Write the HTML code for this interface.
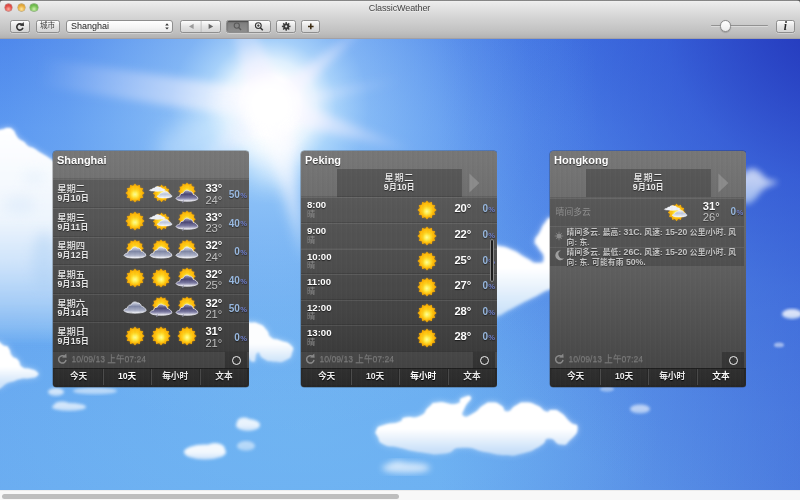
<!DOCTYPE html>
<html lang="zh">
<head>
<meta charset="utf-8">
<title>ClassicWeather</title>
<style>
*{box-sizing:border-box;margin:0;padding:0}
html,body{width:800px;height:500px;overflow:hidden;background:#6aa8ee;font-family:"Liberation Sans","Noto Sans CJK SC",sans-serif;}
#win{position:relative;width:800px;height:500px;overflow:hidden;background:#555}
/* ---------- title / toolbar ---------- */
#bar{will-change:transform;position:absolute;left:0;top:0;width:800px;height:39px;background:linear-gradient(#7a7a7a 0,#8a8a8a .7px,#f0f0f0 1.2px,#ebebeb 2.5px,#d6d6d6 16px,#c3c3c3 30px,#bcbcbc 34px,#b2b2b2 38px);border-bottom:1px solid #a2a0a6;z-index:5;border-radius:3.5px 3.5px 0 0}
#title{position:absolute;left:0;width:799px;top:3.1px;text-align:center;font-size:9px;line-height:11px;color:#444;letter-spacing:-0.1px;text-shadow:0 1px 0 rgba(255,255,255,.5)}
.tl{position:absolute;top:3.6px;width:7.2px;height:7.2px;border-radius:50%}
.tl.r{left:5.2px;background:radial-gradient(circle at 50% 72%,#ffb0a0 0,#e4504a 50%,#c23a34 100%);box-shadow:0 0 0 .4px #a84a44}
.tl.y{left:17.6px;background:radial-gradient(circle at 50% 72%,#ffe6a0 0,#eab040 50%,#c88e26 100%);box-shadow:0 0 0 .4px #a88434}
.tl.g{left:30.4px;background:radial-gradient(circle at 50% 72%,#d0f0b0 0,#78c254 50%,#54a03a 100%);box-shadow:0 0 0 .4px #5c9044}
.btn{position:absolute;top:20px;height:12.5px;border:1px solid #8e8e8e;border-radius:2.5px;background:linear-gradient(#fdfdfd,#e4e4e4 50%,#d4d4d4);box-shadow:0 .5px 0 rgba(255,255,255,.6);font-size:7px;line-height:10px;text-align:center;color:#444;overflow:hidden}
.btn svg{position:absolute;left:0;top:0}
/* ---------- sky ---------- */
#sky{position:absolute;left:0;top:38px;width:800px;height:453px;overflow:hidden;
background:
radial-gradient(circle 520px at 840px -30px,rgba(30,44,180,.9) 0,rgba(34,54,188,.78) 14%,rgba(40,70,204,.5) 34%,rgba(46,84,212,.3) 55%,rgba(54,96,218,.12) 80%,rgba(60,100,220,0) 100%),
linear-gradient(90deg,rgba(70,110,220,0) 55%,rgba(58,96,212,.62) 100%),
linear-gradient(#4a84eb 0,#5895f0 20%,#66a6f0 60%,#6aacf1 100%);}
#sky svg{position:absolute;left:0;top:0}
/* ---------- bottom scrollbar ---------- */
#hs{position:absolute;left:0;top:490px;width:800px;height:10px;background:#f8f8f8;border-top:1px solid #ececec}
#hs i{position:absolute;left:2px;top:2.6px;width:397px;height:5.2px;border-radius:3px;background:#bebebe}
/* ---------- panels ---------- */
.panel{will-change:transform;position:absolute;top:150.7px;width:195.5px;height:236px;border-radius:3.5px;overflow:hidden;
background:linear-gradient(#777 0,#767676 4%,#5c5c5c 55%,#424242 100%);box-shadow:0 0 0 .5px rgba(40,40,40,.55)}
.panel:before{content:"";position:absolute;left:0;top:0;right:0;bottom:0;background:repeating-linear-gradient(90deg,rgba(255,255,255,.012) 0,rgba(255,255,255,.012) 1px,rgba(0,0,0,.016) 1px,rgba(0,0,0,.016) 3px,rgba(255,255,255,0) 3px,rgba(255,255,255,0) 5px);pointer-events:none;z-index:3}
.city{position:absolute;left:4px;top:3.2px;font-size:11px;line-height:13px;font-weight:bold;color:#fff;text-shadow:0 1px 1px rgba(0,0,0,.6)}
.foot{position:absolute;left:0;top:200.3px;width:196px;height:17px;background:rgba(0,0,0,.03);border-top:1px solid rgba(0,0,0,.2)}
.foot .ts{position:absolute;left:18.5px;top:1.8px;font-size:8.6px;line-height:11px;color:#7a7a7a;text-shadow:0 1px 0 rgba(255,255,255,.12);white-space:nowrap}
.foot svg{position:absolute;left:4.2px;top:1.2px}
.foot .cb{position:absolute;left:172.4px;top:0;width:22px;height:17px;background:rgba(0,0,0,.24)}
.foot .cb i{position:absolute;left:6.3px;top:3.7px;width:9px;height:9px;border:1.6px solid #f2f2f2;border-radius:50%}
.tabs{position:absolute;left:0;top:216.8px;width:196px;height:19.2px;background:#272727;border-top:1px solid #1e1e1e}
.tabs span{position:absolute;top:0;height:16px;width:47.8px;background:linear-gradient(#303030,#2a2a2a);border-left:1px solid #4a4a4a;color:#ececec;font-size:8.7px;line-height:14.6px;font-weight:bold;text-align:center;text-shadow:0 1px 1px #000}
.tabs span.on{color:#fff}
</style>
</head>
<body>
<div id="win">
<div id="sky"><svg width="800" height="453" viewBox="0 38 800 453">
<defs>
<radialGradient id="glow" cx="270" cy="106" r="330" gradientUnits="userSpaceOnUse">
<stop offset="0" stop-color="#fff" stop-opacity="1"/>
<stop offset="0.085" stop-color="#fff" stop-opacity="1"/>
<stop offset="0.14" stop-color="#eaf8ff" stop-opacity=".92"/>
<stop offset="0.2" stop-color="#c8ecff" stop-opacity=".72"/>
<stop offset="0.3" stop-color="#b0defc" stop-opacity=".52"/>
<stop offset="0.46" stop-color="#a4d6fa" stop-opacity=".38"/>
<stop offset="0.62" stop-color="#9fd2f8" stop-opacity=".2"/>
<stop offset="0.8" stop-color="#9cd0f8" stop-opacity=".07"/>
<stop offset="1" stop-color="#9cd0f8" stop-opacity="0"/>
</radialGradient>
<radialGradient id="haze" cx="300" cy="430" r="1" gradientUnits="userSpaceOnUse" gradientTransform="translate(300 430) scale(360 200) translate(-300 -430)">
<stop offset="0" stop-color="#7cc6f4" stop-opacity=".34"/><stop offset=".5" stop-color="#7cc6f4" stop-opacity=".2"/><stop offset="1" stop-color="#7cc6f4" stop-opacity="0"/>
</radialGradient>
<filter id="b1" x="-20%" y="-20%" width="140%" height="140%"><feGaussianBlur stdDeviation="1"/></filter>
<filter id="b2" x="-20%" y="-20%" width="140%" height="140%"><feGaussianBlur stdDeviation="1.8"/></filter>
<filter id="b3" x="-20%" y="-20%" width="140%" height="140%"><feGaussianBlur stdDeviation="3"/></filter>
<filter id="b4" x="-30%" y="-30%" width="160%" height="160%"><feGaussianBlur stdDeviation="4"/></filter>
<filter id="b6" x="-30%" y="-30%" width="160%" height="160%"><feGaussianBlur stdDeviation="6"/></filter>
<filter id="b10" x="-40%" y="-40%" width="180%" height="180%"><feGaussianBlur stdDeviation="10"/></filter>
</defs>
<rect x="0" y="38" width="800" height="453" fill="url(#haze)"/>
<rect x="0" y="38" width="800" height="453" fill="url(#glow)"/>
<linearGradient id="rg0" gradientUnits="userSpaceOnUse" x1="270" y1="106" x2="236" y2="10"><stop offset="0" stop-color="#fff" stop-opacity="1"/><stop offset=".4" stop-color="#f4f1ff" stop-opacity="0.6"/><stop offset="1" stop-color="#ece8ff" stop-opacity="0"/></linearGradient>
<linearGradient id="rg1" gradientUnits="userSpaceOnUse" x1="270" y1="106" x2="372" y2="20"><stop offset="0" stop-color="#fff" stop-opacity="1"/><stop offset=".4" stop-color="#f4f1ff" stop-opacity="0.6"/><stop offset="1" stop-color="#ece8ff" stop-opacity="0"/></linearGradient>
<linearGradient id="rg2" gradientUnits="userSpaceOnUse" x1="270" y1="106" x2="40" y2="72"><stop offset="0" stop-color="#fff" stop-opacity="0.85"/><stop offset=".4" stop-color="#f4f1ff" stop-opacity="0.51"/><stop offset="1" stop-color="#ece8ff" stop-opacity="0"/></linearGradient>
<linearGradient id="rg3" gradientUnits="userSpaceOnUse" x1="270" y1="106" x2="412" y2="150"><stop offset="0" stop-color="#fff" stop-opacity="0.95"/><stop offset=".4" stop-color="#f4f1ff" stop-opacity="0.57"/><stop offset="1" stop-color="#ece8ff" stop-opacity="0"/></linearGradient>
<linearGradient id="rg4" gradientUnits="userSpaceOnUse" x1="270" y1="106" x2="400" y2="80"><stop offset="0" stop-color="#fff" stop-opacity="0.5"/><stop offset=".4" stop-color="#f4f1ff" stop-opacity="0.3"/><stop offset="1" stop-color="#ece8ff" stop-opacity="0"/></linearGradient>
<linearGradient id="rg5" gradientUnits="userSpaceOnUse" x1="270" y1="106" x2="190" y2="175"><stop offset="0" stop-color="#fff" stop-opacity="0.8"/><stop offset=".4" stop-color="#f4f1ff" stop-opacity="0.48"/><stop offset="1" stop-color="#ece8ff" stop-opacity="0"/></linearGradient>
<linearGradient id="rg6" gradientUnits="userSpaceOnUse" x1="270" y1="106" x2="306" y2="250"><stop offset="0" stop-color="#fff" stop-opacity="0.7"/><stop offset=".4" stop-color="#f4f1ff" stop-opacity="0.42"/><stop offset="1" stop-color="#ece8ff" stop-opacity="0"/></linearGradient>
<linearGradient id="rg7" gradientUnits="userSpaceOnUse" x1="270" y1="106" x2="312" y2="180"><stop offset="0" stop-color="#fff" stop-opacity="0.6"/><stop offset=".4" stop-color="#f4f1ff" stop-opacity="0.36"/><stop offset="1" stop-color="#ece8ff" stop-opacity="0"/></linearGradient>
<g filter="url(#b4)">
<polygon points="287.0,100.0 253.0,112.0 228.5,12.7 243.5,7.3" fill="url(#rg0)"/>
<polygon points="277.1,114.4 262.9,97.6 371.0,18.9 373.0,21.1" fill="url(#rg1)"/>
<polygon points="272.2,91.2 267.8,120.8 38.0,85.8 42.0,58.2" fill="url(#rg2)"/>
<polygon points="266.2,118.4 273.8,93.6 412.6,148.1 411.4,151.9" fill="url(#rg3)"/>
<polygon points="271.6,113.8 268.4,98.2 399.6,78.0 400.4,82.0" fill="url(#rg4)"/>
<polygon points="260.2,94.6 279.8,117.4 193.3,178.8 186.7,171.2" fill="url(#rg5)"/>
<polygon points="256.4,109.4 283.6,102.6 307.0,249.8 305.0,250.2" fill="url(#rg6)"/>
<polygon points="261.3,110.9 278.7,101.1 312.9,179.5 311.1,180.5" fill="url(#rg7)"/>
</g>
<ellipse cx="205" cy="138" rx="50" ry="24" fill="#dff2ff" opacity=".42" filter="url(#b10)" transform="rotate(-20 205 138)"/>
<circle cx="270" cy="106" r="25" fill="#fff" filter="url(#b6)"/>
<ellipse cx="273" cy="150" rx="26" ry="34" fill="#fff" opacity=".45" filter="url(#b10)"/>
<polygon points="252,110 288,104 304,262" fill="#fff" opacity=".38" filter="url(#b6)"/>
<linearGradient id="bigc" gradientUnits="userSpaceOnUse" x1="0" y1="128" x2="0" y2="345"><stop offset="0" stop-color="#fff"/><stop offset=".42" stop-color="#eef5fd" stop-opacity="1"/><stop offset=".62" stop-color="#d4e7fb" stop-opacity=".9"/><stop offset=".8" stop-color="#bcdaf9" stop-opacity=".62"/><stop offset=".92" stop-color="#b0d4f7" stop-opacity=".3"/><stop offset="1" stop-color="#a8d0f6" stop-opacity="0"/></linearGradient>
<path d="M-20.0 133.0C-14.0 96.7 -13.3 132.2 -6.0 131.0C1.3 129.8 -2.7 130.5 2.0 129.5C6.7 128.5 4.3 127.8 8.0 128.0C11.7 128.2 10.3 127.7 13.0 130.0C15.7 132.3 14.0 132.0 16.0 135.0C18.0 138.0 16.3 136.7 19.0 139.0C21.7 141.3 21.0 139.7 24.0 142.0C27.0 144.3 24.7 143.8 28.0 146.0C31.3 148.2 30.0 146.3 34.0 148.5C38.0 150.7 36.0 150.0 40.0 152.5C44.0 155.0 42.0 153.5 46.0 156.0C50.0 158.5 47.3 157.0 52.0 160.0C56.7 163.0 54.0 160.7 60.0 165.0C66.0 169.3 64.7 164.7 70.0 173.0C75.3 181.3 73.3 171.0 76.0 190.0C78.7 209.0 77.3 193.3 78.0 230.0C78.7 266.7 78.0 261.7 78.0 300.0C78.0 338.3 94.0 328.3 78.0 345.0C62.0 361.7 62.7 350.0 30.0 350.0C-2.7 350.0 -2.0 381.7 -20.0 345.0C-38.0 308.3 -24.0 310.7 -24.0 240.0C-24.0 169.3 -26.0 169.3 -20.0 133.0Z" fill="url(#bigc)" filter="url(#b3)" opacity=".6"/><path d="M-20.0 133.0C-14.0 96.7 -13.3 132.2 -6.0 131.0C1.3 129.8 -2.7 130.5 2.0 129.5C6.7 128.5 4.3 127.8 8.0 128.0C11.7 128.2 10.3 127.7 13.0 130.0C15.7 132.3 14.0 132.0 16.0 135.0C18.0 138.0 16.3 136.7 19.0 139.0C21.7 141.3 21.0 139.7 24.0 142.0C27.0 144.3 24.7 143.8 28.0 146.0C31.3 148.2 30.0 146.3 34.0 148.5C38.0 150.7 36.0 150.0 40.0 152.5C44.0 155.0 42.0 153.5 46.0 156.0C50.0 158.5 47.3 157.0 52.0 160.0C56.7 163.0 54.0 160.7 60.0 165.0C66.0 169.3 64.7 164.7 70.0 173.0C75.3 181.3 73.3 171.0 76.0 190.0C78.7 209.0 77.3 193.3 78.0 230.0C78.7 266.7 78.0 261.7 78.0 300.0C78.0 338.3 94.0 328.3 78.0 345.0C62.0 361.7 62.7 350.0 30.0 350.0C-2.7 350.0 -2.0 381.7 -20.0 345.0C-38.0 308.3 -24.0 310.7 -24.0 240.0C-24.0 169.3 -26.0 169.3 -20.0 133.0Z" fill="url(#bigc)" filter="url(#b1)"/>
<g filter="url(#b6)" opacity=".4"><ellipse cx="44" cy="262" rx="12" ry="30" fill="#a9cdf3"/><ellipse cx="20" cy="205" rx="16" ry="10" fill="#d4e6fa"/><ellipse cx="34" cy="178" rx="12" ry="7" fill="#dbeafb"/></g>
<linearGradient id="cg1" gradientUnits="userSpaceOnUse" x1="0" y1="346" x2="0" y2="384"><stop offset="0" stop-color="#ffffff"/><stop offset="0.55" stop-color="#ffffff"/><stop offset="1" stop-color="#cfe4fa"/></linearGradient>
<path d="M-6.0 347.0C-2.3 334.3 0.0 345.3 5.0 346.0C10.0 346.7 6.7 345.7 9.0 349.0C11.3 352.3 9.0 352.3 12.0 356.0C15.0 359.7 14.7 356.3 18.0 360.0C21.3 363.7 18.0 364.0 22.0 367.0C26.0 370.0 25.0 367.3 30.0 369.0C35.0 370.7 34.7 369.7 37.0 372.0C39.3 374.3 39.3 374.0 37.0 376.0C34.7 378.0 35.7 377.0 30.0 378.0C24.3 379.0 26.7 377.7 20.0 379.0C13.3 380.3 18.7 380.3 10.0 382.0C1.3 383.7 -0.7 395.7 -6.0 384.0C-11.3 372.3 -9.7 359.7 -6.0 347.0Z" filter="url(#b3)" fill="url(#cg1)" opacity="0.55"/>
<path d="M-6.0 347.0C-2.3 334.3 0.0 345.3 5.0 346.0C10.0 346.7 6.7 345.7 9.0 349.0C11.3 352.3 9.0 352.3 12.0 356.0C15.0 359.7 14.7 356.3 18.0 360.0C21.3 363.7 18.0 364.0 22.0 367.0C26.0 370.0 25.0 367.3 30.0 369.0C35.0 370.7 34.7 369.7 37.0 372.0C39.3 374.3 39.3 374.0 37.0 376.0C34.7 378.0 35.7 377.0 30.0 378.0C24.3 379.0 26.7 377.7 20.0 379.0C13.3 380.3 18.7 380.3 10.0 382.0C1.3 383.7 -0.7 395.7 -6.0 384.0C-11.3 372.3 -9.7 359.7 -6.0 347.0Z" filter="url(#b1)" fill="url(#cg1)" opacity="1"/>
<linearGradient id="cg2" gradientUnits="userSpaceOnUse" x1="0" y1="388" x2="0" y2="396"><stop offset="0" stop-color="#ffffff"/><stop offset="0.55" stop-color="#ffffff"/><stop offset="1" stop-color="#d4e7fb"/></linearGradient>
<g filter="url(#b2)" fill="url(#cg2)" opacity="0.7">
<ellipse cx="56" cy="392" rx="8" ry="4"/>
</g>
<linearGradient id="cg3" gradientUnits="userSpaceOnUse" x1="0" y1="387.5" x2="0" y2="394.5"><stop offset="0" stop-color="#ffffff"/><stop offset="0.55" stop-color="#ffffff"/><stop offset="1" stop-color="#d4e7fb"/></linearGradient>
<g filter="url(#b2)" fill="url(#cg3)" opacity="0.55">
<ellipse cx="95" cy="391" rx="22" ry="3.5"/>
</g>
<linearGradient id="cg4" gradientUnits="userSpaceOnUse" x1="0" y1="401.5" x2="0" y2="411"><stop offset="0" stop-color="#ffffff"/><stop offset="0.55" stop-color="#ffffff"/><stop offset="1" stop-color="#d4e7fb"/></linearGradient>
<g filter="url(#b2)" fill="url(#cg4)" opacity="0.7">
<ellipse cx="69" cy="407" rx="17" ry="4"/>
<ellipse cx="62" cy="405" rx="8" ry="3.5"/>
</g>
<linearGradient id="cg5" gradientUnits="userSpaceOnUse" x1="0" y1="322" x2="0" y2="362"><stop offset="0" stop-color="#ffffff"/><stop offset="0.55" stop-color="#ffffff"/><stop offset="1" stop-color="#cfe4fa"/></linearGradient>
<path d="M240.0 322.0C243.7 317.8 242.7 321.8 249.0 322.5C255.3 323.2 253.2 321.5 259.0 324.0C264.8 326.5 262.5 325.5 266.5 330.0C270.5 334.5 266.5 334.0 271.0 337.5C275.5 341.0 273.5 338.0 280.0 340.5C286.5 343.0 286.5 341.0 290.5 345.0C294.5 349.0 293.5 347.5 292.0 352.5C290.5 357.5 292.0 357.0 286.0 360.0C280.0 363.0 281.5 362.0 274.0 361.5C266.5 361.0 269.0 361.5 263.5 358.5C258.0 355.5 261.0 351.3 257.5 352.5C254.0 353.7 257.2 362.8 253.0 362.0C248.8 361.2 250.0 359.0 245.0 350.0C240.0 341.0 239.7 344.3 238.0 335.0C236.3 325.7 236.3 326.2 240.0 322.0Z" filter="url(#b3)" fill="url(#cg5)" opacity="0.5335"/>
<path d="M240.0 322.0C243.7 317.8 242.7 321.8 249.0 322.5C255.3 323.2 253.2 321.5 259.0 324.0C264.8 326.5 262.5 325.5 266.5 330.0C270.5 334.5 266.5 334.0 271.0 337.5C275.5 341.0 273.5 338.0 280.0 340.5C286.5 343.0 286.5 341.0 290.5 345.0C294.5 349.0 293.5 347.5 292.0 352.5C290.5 357.5 292.0 357.0 286.0 360.0C280.0 363.0 281.5 362.0 274.0 361.5C266.5 361.0 269.0 361.5 263.5 358.5C258.0 355.5 261.0 351.3 257.5 352.5C254.0 353.7 257.2 362.8 253.0 362.0C248.8 361.2 250.0 359.0 245.0 350.0C240.0 341.0 239.7 344.3 238.0 335.0C236.3 325.7 236.3 326.2 240.0 322.0Z" filter="url(#b1)" fill="url(#cg5)" opacity="0.97"/>
<linearGradient id="cg6" gradientUnits="userSpaceOnUse" x1="0" y1="417.5" x2="0" y2="431"><stop offset="0" stop-color="#ffffff"/><stop offset="0.55" stop-color="#ffffff"/><stop offset="1" stop-color="#d4e7fb"/></linearGradient>
<g filter="url(#b2)" fill="url(#cg6)" opacity="0.85">
<ellipse cx="248" cy="425" rx="12" ry="6"/>
<ellipse cx="244" cy="422" rx="7" ry="4.5"/>
</g>
<linearGradient id="cg7" gradientUnits="userSpaceOnUse" x1="0" y1="443" x2="0" y2="459.5"><stop offset="0" stop-color="#ffffff"/><stop offset="0.55" stop-color="#ffffff"/><stop offset="1" stop-color="#d4e7fb"/></linearGradient>
<g filter="url(#b2)" fill="url(#cg7)" opacity="0.92">
<ellipse cx="205" cy="452" rx="21" ry="7.5"/>
<ellipse cx="215" cy="449" rx="10" ry="6"/>
</g>
<linearGradient id="cg8" gradientUnits="userSpaceOnUse" x1="0" y1="441" x2="0" y2="451"><stop offset="0" stop-color="#ffffff"/><stop offset="0.55" stop-color="#ffffff"/><stop offset="1" stop-color="#d4e7fb"/></linearGradient>
<g filter="url(#b2)" fill="url(#cg8)" opacity="0.5">
<ellipse cx="246" cy="446" rx="9" ry="5"/>
</g>
<linearGradient id="cg9" gradientUnits="userSpaceOnUse" x1="0" y1="397.4" x2="0" y2="455"><stop offset="0" stop-color="#ffffff"/><stop offset="0.55" stop-color="#ffffff"/><stop offset="1" stop-color="#bfdaf7"/></linearGradient>
<path d="M376.5 430.0C378.5 426.0 376.5 427.7 384.0 425.0C391.5 422.3 392.0 424.5 399.0 422.0C406.0 419.5 398.0 419.5 405.0 417.5C412.0 415.5 412.0 419.5 420.0 416.0C428.0 412.5 423.0 411.5 429.0 407.0C435.0 402.5 429.0 403.5 438.0 402.5C447.0 401.5 448.0 405.5 456.0 404.0C464.0 402.5 457.0 400.2 462.0 398.0C467.0 395.8 470.0 394.4 471.0 397.4C472.0 400.4 467.5 400.8 465.0 407.0C462.5 413.2 460.5 414.0 463.5 416.0C466.5 418.0 467.5 416.5 474.0 413.0C480.5 409.5 477.0 409.0 483.0 405.5C489.0 402.0 486.0 402.5 492.0 402.5C498.0 402.5 496.0 402.5 501.0 405.5C506.0 408.5 502.0 411.5 507.0 411.5C512.0 411.5 510.0 408.5 516.0 405.5C522.0 402.5 518.0 402.5 525.0 402.5C532.0 402.5 530.0 402.5 537.0 405.5C544.0 408.5 541.0 410.0 546.0 411.5C551.0 413.0 547.0 409.5 552.0 410.0C557.0 410.5 555.0 409.0 561.0 413.0C567.0 417.0 564.5 417.0 570.0 422.0C575.5 427.0 577.5 422.0 577.5 428.0C577.5 434.0 575.5 434.5 570.0 440.0C564.5 445.5 568.0 445.0 561.0 444.5C554.0 444.0 556.0 438.0 549.0 438.5C542.0 439.0 549.0 441.0 540.0 446.0C531.0 451.0 534.0 450.5 522.0 453.5C510.0 456.5 516.0 455.5 504.0 455.0C492.0 454.5 500.0 454.5 486.0 452.0C472.0 449.5 476.0 447.0 462.0 447.5C448.0 448.0 458.0 452.0 444.0 453.5C430.0 455.0 435.0 454.0 420.0 452.0C405.0 450.0 411.0 450.0 399.0 447.5C387.0 445.0 391.0 448.0 384.0 444.5C377.0 441.0 380.5 441.8 378.0 437.0C375.5 432.2 374.5 434.0 376.5 430.0Z" filter="url(#b3)" fill="url(#cg9)" opacity="0.55"/>
<path d="M376.5 430.0C378.5 426.0 376.5 427.7 384.0 425.0C391.5 422.3 392.0 424.5 399.0 422.0C406.0 419.5 398.0 419.5 405.0 417.5C412.0 415.5 412.0 419.5 420.0 416.0C428.0 412.5 423.0 411.5 429.0 407.0C435.0 402.5 429.0 403.5 438.0 402.5C447.0 401.5 448.0 405.5 456.0 404.0C464.0 402.5 457.0 400.2 462.0 398.0C467.0 395.8 470.0 394.4 471.0 397.4C472.0 400.4 467.5 400.8 465.0 407.0C462.5 413.2 460.5 414.0 463.5 416.0C466.5 418.0 467.5 416.5 474.0 413.0C480.5 409.5 477.0 409.0 483.0 405.5C489.0 402.0 486.0 402.5 492.0 402.5C498.0 402.5 496.0 402.5 501.0 405.5C506.0 408.5 502.0 411.5 507.0 411.5C512.0 411.5 510.0 408.5 516.0 405.5C522.0 402.5 518.0 402.5 525.0 402.5C532.0 402.5 530.0 402.5 537.0 405.5C544.0 408.5 541.0 410.0 546.0 411.5C551.0 413.0 547.0 409.5 552.0 410.0C557.0 410.5 555.0 409.0 561.0 413.0C567.0 417.0 564.5 417.0 570.0 422.0C575.5 427.0 577.5 422.0 577.5 428.0C577.5 434.0 575.5 434.5 570.0 440.0C564.5 445.5 568.0 445.0 561.0 444.5C554.0 444.0 556.0 438.0 549.0 438.5C542.0 439.0 549.0 441.0 540.0 446.0C531.0 451.0 534.0 450.5 522.0 453.5C510.0 456.5 516.0 455.5 504.0 455.0C492.0 454.5 500.0 454.5 486.0 452.0C472.0 449.5 476.0 447.0 462.0 447.5C448.0 448.0 458.0 452.0 444.0 453.5C430.0 455.0 435.0 454.0 420.0 452.0C405.0 450.0 411.0 450.0 399.0 447.5C387.0 445.0 391.0 448.0 384.0 444.5C377.0 441.0 380.5 441.8 378.0 437.0C375.5 432.2 374.5 434.0 376.5 430.0Z" filter="url(#b1)" fill="url(#cg9)" opacity="1"/>
<linearGradient id="cg10" gradientUnits="userSpaceOnUse" x1="0" y1="461" x2="0" y2="473.5"><stop offset="0" stop-color="#ffffff"/><stop offset="0.55" stop-color="#ffffff"/><stop offset="1" stop-color="#d4e7fb"/></linearGradient>
<g filter="url(#b3)" fill="url(#cg10)" opacity="0.7">
<ellipse cx="406" cy="468" rx="24" ry="5.5"/>
<ellipse cx="398" cy="466" rx="10" ry="5"/>
</g>
<linearGradient id="cg11" gradientUnits="userSpaceOnUse" x1="0" y1="218" x2="0" y2="318"><stop offset="0" stop-color="#ffffff"/><stop offset="0.5" stop-color="#ffffff"/><stop offset="1" stop-color="#c4def8"/></linearGradient>
<path d="M485.0 245.0C489.3 221.0 489.0 244.3 498.0 246.0C507.0 247.7 502.7 246.0 512.0 250.0C521.3 254.0 517.7 253.7 526.0 258.0C534.3 262.3 531.0 263.0 537.0 263.0C543.0 263.0 543.7 263.3 544.0 258.0C544.3 252.7 541.0 252.7 538.0 247.0C535.0 241.3 534.3 246.0 535.0 241.0C535.7 236.0 536.7 238.0 540.0 232.0C543.3 226.0 541.0 227.7 545.0 223.0C549.0 218.3 545.3 218.3 552.0 218.0C558.7 217.7 560.7 199.7 565.0 222.0C569.3 244.3 570.0 262.7 565.0 285.0C560.0 307.3 560.3 285.0 550.0 289.0C539.7 293.0 544.0 292.0 534.0 297.0C524.0 302.0 529.0 299.3 520.0 304.0C511.0 308.7 514.7 307.0 507.0 311.0C499.3 315.0 504.3 313.7 497.0 316.0C489.7 318.3 489.0 341.7 485.0 318.0C481.0 294.3 480.7 269.0 485.0 245.0Z" filter="url(#b3)" fill="url(#cg11)" opacity="0.55"/>
<path d="M485.0 245.0C489.3 221.0 489.0 244.3 498.0 246.0C507.0 247.7 502.7 246.0 512.0 250.0C521.3 254.0 517.7 253.7 526.0 258.0C534.3 262.3 531.0 263.0 537.0 263.0C543.0 263.0 543.7 263.3 544.0 258.0C544.3 252.7 541.0 252.7 538.0 247.0C535.0 241.3 534.3 246.0 535.0 241.0C535.7 236.0 536.7 238.0 540.0 232.0C543.3 226.0 541.0 227.7 545.0 223.0C549.0 218.3 545.3 218.3 552.0 218.0C558.7 217.7 560.7 199.7 565.0 222.0C569.3 244.3 570.0 262.7 565.0 285.0C560.0 307.3 560.3 285.0 550.0 289.0C539.7 293.0 544.0 292.0 534.0 297.0C524.0 302.0 529.0 299.3 520.0 304.0C511.0 308.7 514.7 307.0 507.0 311.0C499.3 315.0 504.3 313.7 497.0 316.0C489.7 318.3 489.0 341.7 485.0 318.0C481.0 294.3 480.7 269.0 485.0 245.0Z" filter="url(#b2)" fill="url(#cg11)" opacity="1"/>
<linearGradient id="cg12" gradientUnits="userSpaceOnUse" x1="0" y1="169.5" x2="0" y2="203"><stop offset="0" stop-color="#f2f7fe"/><stop offset="0.3" stop-color="#f2f7fe"/><stop offset="1" stop-color="#b8d2f6"/></linearGradient>
<path d="M738.0 182.0C739.7 174.0 740.3 177.2 745.0 173.0C749.7 168.8 747.7 170.0 752.0 169.5C756.3 169.0 754.3 169.3 758.0 171.5C761.7 173.7 759.7 173.2 763.0 176.0C766.3 178.8 763.3 178.0 768.0 180.0C772.7 182.0 777.0 180.0 777.0 182.0C777.0 184.0 773.0 183.3 768.0 186.0C763.0 188.7 765.7 186.7 762.0 190.0C758.3 193.3 760.3 192.3 757.0 196.0C753.7 199.7 755.7 198.7 752.0 201.0C748.3 203.3 750.0 204.3 746.0 203.0C742.0 201.7 742.7 204.0 740.0 197.0C737.3 190.0 736.3 190.0 738.0 182.0Z" filter="url(#b3)" fill="url(#cg12)" opacity="0.33"/>
<path d="M738.0 182.0C739.7 174.0 740.3 177.2 745.0 173.0C749.7 168.8 747.7 170.0 752.0 169.5C756.3 169.0 754.3 169.3 758.0 171.5C761.7 173.7 759.7 173.2 763.0 176.0C766.3 178.8 763.3 178.0 768.0 180.0C772.7 182.0 777.0 180.0 777.0 182.0C777.0 184.0 773.0 183.3 768.0 186.0C763.0 188.7 765.7 186.7 762.0 190.0C758.3 193.3 760.3 192.3 757.0 196.0C753.7 199.7 755.7 198.7 752.0 201.0C748.3 203.3 750.0 204.3 746.0 203.0C742.0 201.7 742.7 204.0 740.0 197.0C737.3 190.0 736.3 190.0 738.0 182.0Z" filter="url(#b3)" fill="url(#cg12)" opacity="0.6"/>
<linearGradient id="cg13" gradientUnits="userSpaceOnUse" x1="0" y1="309" x2="0" y2="319"><stop offset="0" stop-color="#ffffff"/><stop offset="0.55" stop-color="#ffffff"/><stop offset="1" stop-color="#d4e7fb"/></linearGradient>
<g filter="url(#b2)" fill="url(#cg13)" opacity="0.8">
<ellipse cx="792" cy="314" rx="10" ry="5"/>
</g>
<linearGradient id="cg14" gradientUnits="userSpaceOnUse" x1="0" y1="342.5" x2="0" y2="347.5"><stop offset="0" stop-color="#ffffff"/><stop offset="0.55" stop-color="#ffffff"/><stop offset="1" stop-color="#d4e7fb"/></linearGradient>
<g filter="url(#b1)" fill="url(#cg14)" opacity="0.5">
<ellipse cx="779" cy="345" rx="5" ry="2.5"/>
</g>
<linearGradient id="cg15" gradientUnits="userSpaceOnUse" x1="0" y1="404.5" x2="0" y2="413.5"><stop offset="0" stop-color="#ffffff"/><stop offset="0.55" stop-color="#ffffff"/><stop offset="1" stop-color="#d4e7fb"/></linearGradient>
<g filter="url(#b2)" fill="url(#cg15)" opacity="0.6">
<ellipse cx="640" cy="409" rx="10" ry="4.5"/>
</g>
<linearGradient id="cg16" gradientUnits="userSpaceOnUse" x1="0" y1="386" x2="0" y2="392"><stop offset="0" stop-color="#ffffff"/><stop offset="0.55" stop-color="#ffffff"/><stop offset="1" stop-color="#d4e7fb"/></linearGradient>
<g filter="url(#b1)" fill="url(#cg16)" opacity="0.4">
<ellipse cx="607" cy="389" rx="7" ry="3"/>
</g>
</svg></div>
<div id="bar">
<div class="tl r"></div><div class="tl y"></div><div class="tl g"></div>
<div id="title">ClassicWeather</div>
<div class="btn" style="left:10px;width:20px"><svg width="18" height="11" viewBox="0 0 18 11"><path d="M11.3 4A3.1 3.1 0 1 0 11.9 6.8" fill="none" stroke="#333" stroke-width="1.6"/><path d="M8.9 4.7L13 5L12.7 1.1Z" fill="#333"/></svg></div>
<div class="btn" style="left:35.5px;width:24px;font-size:7.6px;color:#444;line-height:10.5px">城市</div>
<div class="btn" style="left:65.5px;width:107.5px;height:13px;top:19.5px;border-radius:3px;background:linear-gradient(#fff,#f4f4f4 60%,#e9e9e9);text-align:left;padding-left:4.5px;font-size:9px;line-height:11px;color:#222">Shanghai<svg width="106" height="11" viewBox="0 0 106 11"><path d="M98.2 4.4L100 2.2L101.8 4.4ZM98.2 6.4L100 8.6L101.8 6.4Z" fill="#333"/></svg></div>
<div class="btn" style="left:179.5px;width:41.5px"><svg width="40" height="11" viewBox="0 0 40 11"><path d="M12.6 2.8L12.6 8L8 5.4Z" fill="#9a9a9a"/><path d="M27.6 2.8L27.6 8L32.2 5.4Z" fill="#666"/><rect x="19.7" y="0" width=".8" height="11" fill="#b5b5b5"/></svg></div>
<div class="btn" style="left:226px;width:44.5px"><div style="position:absolute;left:0;top:0;width:21px;height:11px;background:linear-gradient(#7d7d7d,#8e8e8e);box-shadow:inset 0 1px 1.5px rgba(0,0,0,.45)"></div><svg width="43" height="11" viewBox="0 0 43 11"><circle cx="9.8" cy="4.6" r="2.6" fill="none" stroke="#5a5a5a" stroke-width="1.1"/><path d="M11.7 6.6L14 9" stroke="#5a5a5a" stroke-width="1.4"/><circle cx="31.3" cy="4.6" r="2.9" fill="none" stroke="#333" stroke-width="1.1"/><path d="M33.4 6.8L35.8 9.3" stroke="#333" stroke-width="1.5"/><path d="M29.9 4.6h2.8M31.3 3.2v2.8" stroke="#333" stroke-width=".8"/><rect x="21" y="0" width=".8" height="11" fill="#777"/></svg></div>
<div class="btn" style="left:275.5px;width:20px"><svg width="18" height="11" viewBox="0 0 18 11"><g transform="translate(9.2 5.4)" fill="#3a3a3a"><rect x="-.75" y="-4.3" width="1.5" height="2" transform="rotate(0)"/><rect x="-.75" y="-4.3" width="1.5" height="2" transform="rotate(45)"/><rect x="-.75" y="-4.3" width="1.5" height="2" transform="rotate(90)"/><rect x="-.75" y="-4.3" width="1.5" height="2" transform="rotate(135)"/><rect x="-.75" y="-4.3" width="1.5" height="2" transform="rotate(180)"/><rect x="-.75" y="-4.3" width="1.5" height="2" transform="rotate(225)"/><rect x="-.75" y="-4.3" width="1.5" height="2" transform="rotate(270)"/><rect x="-.75" y="-4.3" width="1.5" height="2" transform="rotate(315)"/><circle r="3" /><circle r="1.1" fill="#e6e6e6"/></g></svg></div>
<div class="btn" style="left:300.5px;width:19.5px"><svg width="18" height="11" viewBox="0 0 18 11"><path d="M6 5.4h5.6M8.8 2.6v5.6" stroke="#3a2a10" stroke-width="1.5"/></svg></div>
<div style="position:absolute;left:711px;top:25.2px;width:57px;height:1.2px;background:#929292;border-radius:1px;box-shadow:0 .5px 0 rgba(255,255,255,.7)"></div>
<div style="position:absolute;left:720px;top:20.3px;width:11.4px;height:11.4px;border-radius:50%;background:linear-gradient(#fff,#ececec);border:1px solid #8c8c8c;box-shadow:0 .5px 1px rgba(0,0,0,.3)"></div>
<div class="btn" style="left:775.5px;width:19.5px;font-family:'Liberation Serif',serif;font-style:italic;font-weight:bold;font-size:11.5px;line-height:10px;color:#222">i</div>
</div>
<svg width="0" height="0" style="position:absolute"><defs>
<radialGradient id="sg" cx=".5" cy=".5" r=".5"><stop offset="0" stop-color="#ffd018"/><stop offset=".5" stop-color="#ffc410"/><stop offset=".68" stop-color="#fdb408" stop-opacity=".92"/><stop offset=".82" stop-color="#f0a000" stop-opacity=".5"/><stop offset=".93" stop-color="#e09000" stop-opacity=".15"/><stop offset="1" stop-color="#d88a00" stop-opacity="0"/></radialGradient>
<radialGradient id="sd" cx=".5" cy=".5" r=".5"><stop offset="0" stop-color="#ffd620"/><stop offset=".7" stop-color="#ffc612"/><stop offset="1" stop-color="#fdb408"/></radialGradient>
<radialGradient id="sc" cx=".5" cy=".5" r=".5"><stop offset="0" stop-color="#ffff9c"/><stop offset=".4" stop-color="#fff25a" stop-opacity=".9"/><stop offset="1" stop-color="#ffd820" stop-opacity="0"/></radialGradient>
<linearGradient id="cw" x1="0" y1="0" x2="0" y2="1"><stop offset="0" stop-color="#ffffff"/><stop offset=".45" stop-color="#bcc6dc"/><stop offset="1" stop-color="#f4f6fa"/></linearGradient>
<linearGradient id="cg" x1="0" y1="0" x2="0" y2="1"><stop offset="0" stop-color="#dfe3ee"/><stop offset=".4" stop-color="#8088a6"/><stop offset=".75" stop-color="#aab0c6"/><stop offset="1" stop-color="#f4f5f9"/></linearGradient>
<linearGradient id="cd" x1="0" y1="0" x2="0" y2="1"><stop offset="0" stop-color="#a9a8c4"/><stop offset=".35" stop-color="#4a4674"/><stop offset=".7" stop-color="#7c7aa2"/><stop offset="1" stop-color="#f6f6fa"/></linearGradient>
<filter id="sb" x="-20%" y="-20%" width="140%" height="140%"><feGaussianBlur stdDeviation=".6"/></filter>
<filter id="ib" x="-20%" y="-20%" width="140%" height="140%"><feGaussianBlur stdDeviation=".35"/></filter>
<g id="sun" filter="url(#ib)"><circle r="10" fill="url(#sg)" opacity=".55"/><polygon points="0.0,-9.6 1.9,-7.0 4.8,-8.3 5.1,-5.1 8.3,-4.8 7.0,-1.9 9.6,0.0 7.0,1.9 8.3,4.8 5.1,5.1 4.8,8.3 1.9,7.0 0.0,9.6 -1.9,7.0 -4.8,8.3 -5.1,5.1 -8.3,4.8 -7.0,1.9 -9.6,0.0 -7.0,-1.9 -8.3,-4.8 -5.1,-5.1 -4.8,-8.3 -1.9,-7.0" fill="#ffb300" opacity=".95" filter="url(#sb)"/><circle r="7.6" fill="url(#sd)"/><circle cy="1.4" r="6" fill="url(#sc)"/></g>
<g id="sunS"><circle r="9.2" fill="url(#sg)" opacity=".55"/><polygon points="0.0,-8.8 1.7,-6.4 4.4,-7.6 4.7,-4.7 7.6,-4.4 6.4,-1.7 8.8,0.0 6.4,1.7 7.6,4.4 4.7,4.7 4.4,7.6 1.7,6.4 0.0,8.8 -1.7,6.4 -4.4,7.6 -4.7,4.7 -7.6,4.4 -6.4,1.7 -8.8,0.0 -6.4,-1.7 -7.6,-4.4 -4.7,-4.7 -4.4,-7.6 -1.7,-6.4" fill="#ffb300" opacity=".95" filter="url(#sb)"/><circle r="7" fill="url(#sd)"/><circle cy="1" r="5" fill="url(#sc)"/></g>
<path id="cloudp" d="M-11 2.6C-10.6 1.4-8.8.8-7.4.6C-7.2-1.2-5.4-2.4-3.8-2C-3-4.4.2-5.4 2.2-3.8C4.2-4 6-2.6 6.2-1C8-.8 10.4.6 11 2.6C9.6 4.2 5 4.8 0 4.8C-5 4.8-9.6 4.2-11 2.6Z"/>
<g id="pc" filter="url(#ib)"><use href="#sunS" x=".6" y=".4"/><use href="#cloudp" transform="translate(-3.6 -4) scale(.74 .52)" fill="#eef1f8" stroke="#fff" stroke-width=".5"/><use href="#cloudp" transform="translate(3.6 1.4) scale(.68 .76)" fill="url(#cw)" stroke="#fff" stroke-width=".6"/></g>
<g id="mc" filter="url(#ib)"><use href="#sunS" x="0" y="-1.8"/><use href="#cloudp" transform="translate(0 2.4) scale(1 1.18)" fill="url(#cg)" stroke="#f4f5fa" stroke-width=".7"/></g>
<g id="ts" filter="url(#ib)"><use href="#sunS" x="0" y="-1.8"/><use href="#cloudp" transform="translate(0 2.6) scale(1 1.18)" fill="url(#cd)" stroke="#e8e8f0" stroke-width=".7"/><path d="M-3.6 7.4l-.7 2.6" stroke="#8c8ca4" stroke-width=".9"/></g>
<g id="cld" filter="url(#ib)"><use href="#cloudp" transform="translate(0 .4) scale(1.02 1.2)" fill="url(#cg)" stroke="#eceef4" stroke-width=".7"/></g>
</defs></svg>
<style>
.row{position:absolute;left:0;width:195.5px;background:rgba(0,0,0,.19);border-top:1px solid rgba(255,255,255,.09);box-shadow:0 -1px 0 rgba(0,0,0,.12)}
.dl{position:absolute;left:4.2px;top:3.8px;font-size:9.3px;line-height:10px;font-weight:500;color:#e9e9e9;white-space:nowrap;text-shadow:0 1px 1px rgba(0,0,0,.5)}
.dl b i{font-style:normal;font-size:7.7px;position:relative;top:-.3px;margin:0 .3px}.dl b{display:block;font-size:8.7px;line-height:8.8px;margin-left:.2px;font-weight:bold;font-family:"Liberation Sans","Noto Sans CJK SC",sans-serif;letter-spacing:.1px}
.hi{position:absolute;font-size:11.2px;line-height:11px;font-weight:bold;color:#fff;text-shadow:0 1px 1px rgba(0,0,0,.6);white-space:nowrap}
.lo{position:absolute;font-size:11.2px;line-height:11px;color:#c2c2c2;white-space:nowrap;text-shadow:0 1px 1px rgba(0,0,0,.4)}
.pc{position:absolute;font-size:10px;line-height:11px;font-weight:bold;color:#98b8df;white-space:nowrap;text-align:right;text-shadow:0 1px 1px rgba(0,0,0,.5)}
.pc small{font-size:7.6px;color:#6e7ecb;position:relative;top:-.2px;margin-left:.3px}
.dn{position:absolute;left:36px;top:18.4px;width:124.6px;height:28px;background:rgba(0,0,0,.24);text-align:center;color:#ededed;font-weight:500;text-shadow:0 1px 1px rgba(0,0,0,.5)}
.dn .d1{position:absolute;left:0;width:100%;top:3.4px;font-size:9.2px;line-height:10px;letter-spacing:.6px}
.dn .d2{position:absolute;left:0;width:100%;top:12.7px;font-size:8.7px;line-height:10px;font-weight:bold}.dn .d2 i{font-style:normal;font-size:7.7px;position:relative;top:-.3px;margin:0 .3px}
.tm{position:absolute;left:6px;top:1px;font-size:9.6px;line-height:11px;font-weight:bold;color:#fff;text-shadow:0 1px 1px rgba(0,0,0,.6)}
.cn{position:absolute;left:6px;top:11.8px;font-size:8.2px;line-height:10px;color:#8c8c8c}
.tx{position:absolute;left:0;width:194px;background:rgba(0,0,0,.16);border-top:1px solid rgba(255,255,255,.08)}
.tx p{position:absolute;left:16.5px;top:1.2px;width:178px;font-size:7.7px;line-height:9.7px;font-weight:bold;color:#c4c4c4;text-shadow:0 1px 1px rgba(0,0,0,.45);white-space:nowrap;letter-spacing:.2px}.tx p b{font-size:8.7px;letter-spacing:0}
</style>
<div class="panel" style="left:52.8px"><div class="city">Shanghai</div>
<div class="row" style="top:28.4px;height:28.6px">
<div class="dl">星期二<b>9<i>月</i>10<i>日</i></b></div>
<svg style="position:absolute;left:70px;top:0.2px;overflow:visible" width="24" height="24" viewBox="-12 -12 24 24"><use href="#sun"/></svg>
<svg style="position:absolute;left:95.8px;top:0.2px;overflow:visible" width="24" height="24" viewBox="-12 -12 24 24"><use href="#pc"/></svg>
<svg style="position:absolute;left:121.8px;top:0.2px;overflow:visible" width="24" height="24" viewBox="-12 -12 24 24"><use href="#ts"/></svg>
<div class="hi" style="left:152.4px;top:2.9px">33°</div><div class="lo" style="left:152.4px;top:14.2px">24°</div>
<div class="pc" style="right:1.6px;top:8.5px">50<small>%</small></div>
</div>
<div class="row" style="top:57.0px;height:28.6px">
<div class="dl">星期三<b>9<i>月</i>11<i>日</i></b></div>
<svg style="position:absolute;left:70px;top:0.2px;overflow:visible" width="24" height="24" viewBox="-12 -12 24 24"><use href="#sun"/></svg>
<svg style="position:absolute;left:95.8px;top:0.2px;overflow:visible" width="24" height="24" viewBox="-12 -12 24 24"><use href="#pc"/></svg>
<svg style="position:absolute;left:121.8px;top:0.2px;overflow:visible" width="24" height="24" viewBox="-12 -12 24 24"><use href="#ts"/></svg>
<div class="hi" style="left:152.4px;top:2.9px">33°</div><div class="lo" style="left:152.4px;top:14.2px">23°</div>
<div class="pc" style="right:1.6px;top:8.5px">40<small>%</small></div>
</div>
<div class="row" style="top:85.6px;height:28.6px">
<div class="dl">星期四<b>9<i>月</i>12<i>日</i></b></div>
<svg style="position:absolute;left:70px;top:0.2px;overflow:visible" width="24" height="24" viewBox="-12 -12 24 24"><use href="#mc"/></svg>
<svg style="position:absolute;left:95.8px;top:0.2px;overflow:visible" width="24" height="24" viewBox="-12 -12 24 24"><use href="#mc"/></svg>
<svg style="position:absolute;left:121.8px;top:0.2px;overflow:visible" width="24" height="24" viewBox="-12 -12 24 24"><use href="#mc"/></svg>
<div class="hi" style="left:152.4px;top:2.9px">32°</div><div class="lo" style="left:152.4px;top:14.2px">24°</div>
<div class="pc" style="right:1.6px;top:8.5px">0<small>%</small></div>
</div>
<div class="row" style="top:114.2px;height:28.6px">
<div class="dl">星期五<b>9<i>月</i>13<i>日</i></b></div>
<svg style="position:absolute;left:70px;top:0.2px;overflow:visible" width="24" height="24" viewBox="-12 -12 24 24"><use href="#sun"/></svg>
<svg style="position:absolute;left:95.8px;top:0.2px;overflow:visible" width="24" height="24" viewBox="-12 -12 24 24"><use href="#sun"/></svg>
<svg style="position:absolute;left:121.8px;top:0.2px;overflow:visible" width="24" height="24" viewBox="-12 -12 24 24"><use href="#ts"/></svg>
<div class="hi" style="left:152.4px;top:2.9px">32°</div><div class="lo" style="left:152.4px;top:14.2px">25°</div>
<div class="pc" style="right:1.6px;top:8.5px">40<small>%</small></div>
</div>
<div class="row" style="top:142.8px;height:28.6px">
<div class="dl">星期六<b>9<i>月</i>14<i>日</i></b></div>
<svg style="position:absolute;left:70px;top:0.2px;overflow:visible" width="24" height="24" viewBox="-12 -12 24 24"><use href="#cld"/></svg>
<svg style="position:absolute;left:95.8px;top:0.2px;overflow:visible" width="24" height="24" viewBox="-12 -12 24 24"><use href="#ts"/></svg>
<svg style="position:absolute;left:121.8px;top:0.2px;overflow:visible" width="24" height="24" viewBox="-12 -12 24 24"><use href="#ts"/></svg>
<div class="hi" style="left:152.4px;top:2.9px">32°</div><div class="lo" style="left:152.4px;top:14.2px">21°</div>
<div class="pc" style="right:1.6px;top:8.5px">50<small>%</small></div>
</div>
<div class="row" style="top:171.4px;height:28.6px">
<div class="dl">星期日<b>9<i>月</i>15<i>日</i></b></div>
<svg style="position:absolute;left:70px;top:0.2px;overflow:visible" width="24" height="24" viewBox="-12 -12 24 24"><use href="#sun"/></svg>
<svg style="position:absolute;left:95.8px;top:0.2px;overflow:visible" width="24" height="24" viewBox="-12 -12 24 24"><use href="#sun"/></svg>
<svg style="position:absolute;left:121.8px;top:0.2px;overflow:visible" width="24" height="24" viewBox="-12 -12 24 24"><use href="#sun"/></svg>
<div class="hi" style="left:152.4px;top:2.9px">31°</div><div class="lo" style="left:152.4px;top:14.2px">21°</div>
<div class="pc" style="right:1.6px;top:8.5px">0<small>%</small></div>
</div>
<div class="foot"><svg width="11" height="12" viewBox="0 0 11 12"><path d="M7.9 3.7A3.7 3.7 0 1 0 9 6.9" fill="none" stroke="#8a8a8a" stroke-width="1.5"/><path d="M5 4.4L9.6 4.8L9.3 .5Z" fill="#8a8a8a"/></svg><span class="ts">10/09/13 上午07:24</span><div class="cb"><i></i></div></div><div class="tabs"><span style="left:1.2px;border-left-color:#2c2c2c">今天</span><span style="left:49.7px" class="on">10天</span><span style="left:97.8px">每小时</span><span style="left:146.6px">文本</span></div></div>
<div class="panel" style="left:301.2px"><div class="city">Peking</div><div class="dn"><div class="d1">星期二</div><div class="d2">9<i>月</i>10<i>日</i></div></div><svg style="position:absolute;left:167.5px;top:22px" width="11" height="20" viewBox="0 0 11 20"><path d="M.4 .6L10.4 10L.4 19.4Z" fill="#8b8b8b"/></svg>
<div class="row" style="top:46.3px;height:25.6px"><div class="tm">8:00</div><div class="cn">晴</div>
<svg style="position:absolute;left:114px;top:-0.2px;overflow:visible" width="24" height="24" viewBox="-12 -12 24 24"><use href="#sun"/></svg>
<div class="hi" style="left:153.4px;top:5px">20°</div>
<div class="pc" style="left:181.4px;top:5.2px">0<small>%</small></div></div>
<div class="row" style="top:71.9px;height:25.6px"><div class="tm">9:00</div><div class="cn">晴</div>
<svg style="position:absolute;left:114px;top:-0.2px;overflow:visible" width="24" height="24" viewBox="-12 -12 24 24"><use href="#sun"/></svg>
<div class="hi" style="left:153.4px;top:5px">22°</div>
<div class="pc" style="left:181.4px;top:5.2px">0<small>%</small></div></div>
<div class="row" style="top:97.5px;height:25.6px"><div class="tm">10:00</div><div class="cn">晴</div>
<svg style="position:absolute;left:114px;top:-0.2px;overflow:visible" width="24" height="24" viewBox="-12 -12 24 24"><use href="#sun"/></svg>
<div class="hi" style="left:153.4px;top:5px">25°</div>
<div class="pc" style="left:181.4px;top:5.2px">0<small>%</small></div></div>
<div class="row" style="top:123.1px;height:25.6px"><div class="tm">11:00</div><div class="cn">晴</div>
<svg style="position:absolute;left:114px;top:-0.2px;overflow:visible" width="24" height="24" viewBox="-12 -12 24 24"><use href="#sun"/></svg>
<div class="hi" style="left:153.4px;top:5px">27°</div>
<div class="pc" style="left:181.4px;top:5.2px">0<small>%</small></div></div>
<div class="row" style="top:148.7px;height:25.6px"><div class="tm">12:00</div><div class="cn">晴</div>
<svg style="position:absolute;left:114px;top:-0.2px;overflow:visible" width="24" height="24" viewBox="-12 -12 24 24"><use href="#sun"/></svg>
<div class="hi" style="left:153.4px;top:5px">28°</div>
<div class="pc" style="left:181.4px;top:5.2px">0<small>%</small></div></div>
<div class="row" style="top:174.3px;height:25.6px"><div class="tm">13:00</div><div class="cn">晴</div>
<svg style="position:absolute;left:114px;top:-0.2px;overflow:visible" width="24" height="24" viewBox="-12 -12 24 24"><use href="#sun"/></svg>
<div class="hi" style="left:153.4px;top:5px">28°</div>
<div class="pc" style="left:181.4px;top:5.2px">0<small>%</small></div></div>
<div style="position:absolute;left:189.2px;top:88px;width:4.2px;height:43px;border-radius:2.1px;background:#1c1c1c;border:.6px solid #8a8a8a;z-index:4"></div>
<div class="foot"><svg width="11" height="12" viewBox="0 0 11 12"><path d="M7.9 3.7A3.7 3.7 0 1 0 9 6.9" fill="none" stroke="#8a8a8a" stroke-width="1.5"/><path d="M5 4.4L9.6 4.8L9.3 .5Z" fill="#8a8a8a"/></svg><span class="ts">10/09/13 上午07:24</span><div class="cb"><i></i></div></div><div class="tabs"><span style="left:1.2px;border-left-color:#2c2c2c">今天</span><span style="left:49.7px">10天</span><span style="left:97.8px" class="on">每小时</span><span style="left:146.6px">文本</span></div></div>
<div class="panel" style="left:550.3px"><div class="city">Hongkong</div><div class="dn"><div class="d1">星期二</div><div class="d2">9<i>月</i>10<i>日</i></div></div><svg style="position:absolute;left:167.5px;top:22px" width="11" height="20" viewBox="0 0 11 20"><path d="M.4 .6L10.4 10L.4 19.4Z" fill="#8b8b8b"/></svg>
<div class="row" style="top:46.6px;height:28.2px;width:194px"><div class="cn" style="left:5.6px;top:8.6px;font-size:8.8px;line-height:11px;color:#909090">晴间多云</div>
<svg style="position:absolute;left:113.6px;top:1px;overflow:visible" width="24" height="24" viewBox="-12 -12 24 24"><use href="#pc"/></svg>
<div class="hi" style="left:152.8px;top:2.6px">31°</div><div class="lo" style="left:152.8px;top:13px">26°</div><div class="pc" style="right:.8px;top:7.6px">0<small>%</small></div></div>
<div class="tx" style="top:74.8px;height:21.6px"><svg style="position:absolute;left:4.2px;top:4.6px" width="10" height="10" viewBox="-5 -5 10 10"><circle r="2.6" fill="#8a8a8a"/><g stroke="#858585" stroke-width=".9"><path d="M0 -3.1V-4.3" transform="rotate(0)"/><path d="M0 -3.1V-4.3" transform="rotate(45)"/><path d="M0 -3.1V-4.3" transform="rotate(90)"/><path d="M0 -3.1V-4.3" transform="rotate(135)"/><path d="M0 -3.1V-4.3" transform="rotate(180)"/><path d="M0 -3.1V-4.3" transform="rotate(225)"/><path d="M0 -3.1V-4.3" transform="rotate(270)"/><path d="M0 -3.1V-4.3" transform="rotate(315)"/></g></svg><p>晴间多云. 最高: <b>31C.</b> 风速: <b>15-20</b> 公里/小时. 风<br>向: 东.</p></div>
<div class="tx" style="top:96.4px;height:18.6px"><svg style="position:absolute;left:3.6px;top:1.8px" width="11" height="11" viewBox="0 0 11 11"><path d="M6.8 .6A4.8 4.8 0 1 0 10.2 8A4 4 0 0 1 6.8 .6Z" fill="#a0a0a0"/></svg><p style="top:-.4px">晴间多云. 最低: <b>26C.</b> 风速: <b>15-20</b> 公里/小时. 风<br>向: 东. 可能有雨 <b>50%.</b></p></div>
<div class="foot" style="border-top-color:transparent;background:none"><svg width="11" height="12" viewBox="0 0 11 12"><path d="M7.9 3.7A3.7 3.7 0 1 0 9 6.9" fill="none" stroke="#8a8a8a" stroke-width="1.5"/><path d="M5 4.4L9.6 4.8L9.3 .5Z" fill="#8a8a8a"/></svg><span class="ts">10/09/13 上午07:24</span><div class="cb"><i></i></div></div><div class="tabs"><span style="left:1.2px;border-left-color:#2c2c2c">今天</span><span style="left:49.7px">10天</span><span style="left:97.8px">每小时</span><span style="left:146.6px" class="on">文本</span></div></div>
<div id="hs"><i></i></div>
</div>
</body>
</html>
